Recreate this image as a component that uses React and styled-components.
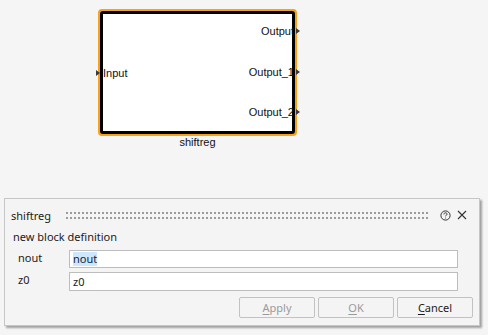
import React from 'react';
import styled, { createGlobalStyle } from 'styled-components';

const GlobalStyle = createGlobalStyle`
    html, body {
        margin: 0;
        padding: 0;
        background: #f5f5f5;
    }
    body {
        width: 488px;
        height: 335px;
        overflow: hidden;
    }
`

const Page = styled.div`
    width: 488px;
    height: 335px;
    display: flex;
    flex-direction: column;
`

const Canvas = styled.div`
    position: relative;
    height: 198px;
    flex-shrink: 0;
`

// node on the diagram canvas
const Node = styled.div`
    position: absolute;
    left: ${p => p.x}px;
    top: ${p => p.y}px;
    display: flex;
    flex-direction: column;
    align-items: center;
`

const NodeFrame = styled.div`
    width: 195px;
    height: 123px;
    border: 2px solid #f7a21b;
    border-radius: 4px;
    background: #f7a21b;
`

const NodeBody = styled.div`
    box-sizing: border-box;
    height: 100%;
    border: 3px solid #000;
    border-radius: 3px;
    background: #fff;
    display: flex;
    justify-content: space-between;
`

const PortColumn = styled.div`
    display: flex;
    flex-direction: column;
    justify-content: ${p => p.side === 'in' ? 'center' : 'space-between'};
    align-items: ${p => p.side === 'in' ? 'flex-start' : 'flex-end'};
    padding: ${p => p.side === 'in' ? '0' : '10px 0 12px'};
`

const Port = styled.div`
    position: relative;
    font-family: 'Liberation Sans', Arial, sans-serif;
    font-size: 11px;
    line-height: 14px;
    color: #111;
    margin-right: ${p => p.side === 'out' ? '-2px' : '0'};
    &::after {
        content: '';
        position: absolute;
        top: 4px;
        ${p => p.side === 'in' ? 'left: -7px;' : 'right: -6px;'}
        border-top: 3px solid transparent;
        border-bottom: 3px solid transparent;
        border-left: 4px solid #3a3a3a;
    }
`

const NodeCaption = styled.div`
    font-family: 'Liberation Sans', Arial, sans-serif;
    font-size: 11px;
    line-height: 12px;
    color: #111;
    margin-top: 0px;
`

const Dialog = styled.div`
    margin-left: 4px;
    width: 474px;
    height: 126px;
    border: 1px solid #c6c6c6;
    background: #f4f4f4;
    box-shadow: 2px 2px 2px rgba(0,0,0,0.35);
    font-family: 'Noto Sans', sans-serif;
    font-size: 11px;
    color: #1b1b1b;
    display: flex;
    flex-direction: column;
`

const TitleBar = styled.div`
    display: flex;
    align-items: center;
    height: 18px;
    padding: 7px 10px 0 6px;
`

const Title = styled.div`
    width: 55px;
`

const Grip = styled.div`
    flex: 1;
    height: 7px;
    margin: 1px 8px 0 0;
    background-image: radial-gradient(circle at 1px 1px, #9c9c9c 0.9px, transparent 1.2px);
    background-size: 4px 5px;
`

const IconButton = styled.span`
    display: flex;
    align-items: center;
    justify-content: center;
    width: 14px;
    height: 14px;
    margin-left: ${p => p.gap || 0}px;
    color: #333;
`

const Subtitle = styled.div`
    padding: 5px 0 0 8px;
    line-height: 16px;
`

const Rows = styled.div`
    display: flex;
    flex-direction: column;
    gap: 4px;
    padding: 5px 21px 0 13px;
`

const Row = styled.div`
    display: flex;
    align-items: center;
`

const Label = styled.div`
    width: 51px;
    margin-top: -4px;
`

const Field = styled.div`
    flex: 1;
    box-sizing: border-box;
    height: ${p => p.h}px;
    border: 1px solid #bdbdbd;
    background: #fff;
    padding: 0 3px;
    display: flex;
    align-items: center;
    line-height: 14px;
`

const Selected = styled.span`
    background: #cce8ff;
    color: #10263c;
`

const Buttons = styled.div`
    display: flex;
    justify-content: flex-end;
    gap: 3px;
    padding: 6px 6px 0 0;
`

const Button = styled.div`
    box-sizing: border-box;
    width: ${p => p.w}px;
    height: 21px;
    border: 1px solid #c2c2c2;
    border-radius: 2px;
    background: #f4f4f4;
    display: flex;
    align-items: center;
    justify-content: center;
    color: ${p => p.disabled ? '#9a9a9a' : '#1b1b1b'};
    u { text-underline-offset: 2px; }
`

const HelpIcon = () => (
    <svg width="11" height="11" viewBox="0 0 11 11" fill="none" stroke="#333" strokeWidth="1">
        <circle cx="5.5" cy="5.5" r="4.6" />
        <path d="M3.9 4.4c0-1 .7-1.6 1.6-1.6s1.6.6 1.6 1.4c0 .9-1.6 1-1.6 2.1" />
        <circle cx="5.5" cy="8" r="0.5" fill="#333" stroke="none" />
    </svg>
)

const CloseIcon = () => (
    <svg width="10" height="10" viewBox="0 0 10 10" stroke="#333" strokeWidth="1.1">
        <path d="M1 1L9 9M9 1L1 9" />
    </svg>
)

const App = () => {
    const outputs = ['Output', 'Output_1', 'Output_2']
    return (
        <Page>
            <GlobalStyle />
            <Canvas>
                <Node x={98} y={9}>
                    <NodeFrame>
                        <NodeBody>
                            <PortColumn side="in">
                                <Port side="in">Input</Port>
                            </PortColumn>
                            <PortColumn side="out">
                                {outputs.map(o => <Port side="out" key={o}>{o}</Port>)}
                            </PortColumn>
                        </NodeBody>
                    </NodeFrame>
                    <NodeCaption>shiftreg</NodeCaption>
                </Node>
            </Canvas>
            <Dialog>
                <TitleBar>
                    <Title>shiftreg</Title>
                    <Grip />
                    <IconButton><HelpIcon /></IconButton>
                    <IconButton gap={3}><CloseIcon /></IconButton>
                </TitleBar>
                <Subtitle>new block definition</Subtitle>
                <Rows>
                    <Row>
                        <Label>nout</Label>
                        <Field h={18}><Selected>nout</Selected></Field>
                    </Row>
                    <Row>
                        <Label>z0</Label>
                        <Field h={19}>z0</Field>
                    </Row>
                </Rows>
                <Buttons>
                    <Button w={76} disabled><span><u>A</u>pply</span></Button>
                    <Button w={76} disabled><span><u>O</u>K</span></Button>
                    <Button w={76}><span><u>C</u>ancel</span></Button>
                </Buttons>
            </Dialog>
        </Page>
    )
}

export default App
